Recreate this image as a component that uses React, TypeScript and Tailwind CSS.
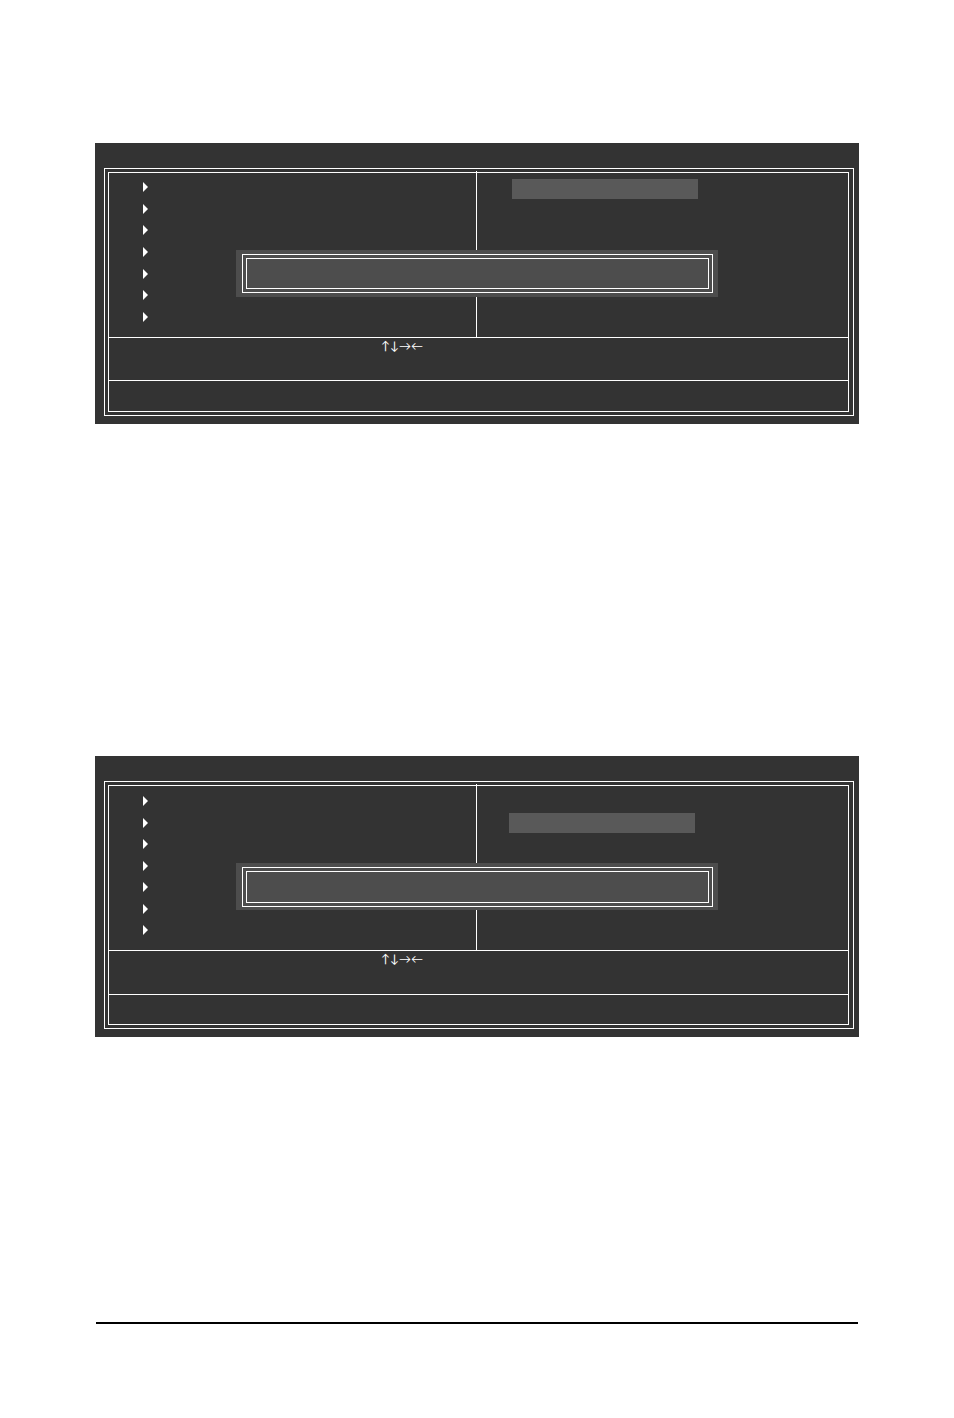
const menuItems = ["item-1", "item-2", "item-3", "item-4", "item-5", "item-6", "item-7"]

const screens = [
  {
    id: "first",
    list: "pt-[9px] pb-[15px]",
    highlight: "pt-1.5 pl-[35px]",
    dialog: "pb-1",
    help: "h-[43px]",
    footer: "h-[30px]",
  },
  {
    id: "second",
    list: "pt-[10px] pb-[15px]",
    highlight: "pt-[27px] pl-8",
    dialog: "pb-[3px]",
    help: "h-11",
    footer: "h-[29px]",
  },
]

function Marker() {
  return (
    <svg className="block h-[10px] w-[5px]" viewBox="0 0 5 10" fill="white" aria-hidden="true">
      <path d="M0 0L5 5L0 10Z" />
    </svg>
  )
}

function BiosScreen({ screen }: { screen: (typeof screens)[number] }) {
  return (
    <section className="bg-[#333333] pt-[25px] pr-[5px] pb-2 pl-[9px] text-white">
      {/* Double frame */}
      <div className="border border-white pt-[3px] pr-1 pb-[3px] pl-[3px]">
        <div className="border border-white">
          <div className="relative flex h-[165px] border-b border-white">
            <ul className={`flex flex-1 flex-col justify-between pl-[34px] ${screen.list}`}>
              {menuItems.map((item) => (
                <li key={item}>
                  <Marker />
                </li>
              ))}
            </ul>
            {/* Divider crosses the inner frame */}
            <div className="-mt-0.5 w-px bg-white" />
            <div className={`w-[371px] ${screen.highlight}`}>
              <div className="h-5 w-[186px] bg-[#595959]" />
            </div>

            {/* Dialog */}
            <div
              className={`absolute top-[77px] right-[130px] left-[127px] flex h-[47px] bg-[#4d4d4d] pt-1 pr-[5px] pl-1.5 ${screen.dialog}`}
            >
              <div className="flex flex-1 border border-white p-[3px]">
                <div className="flex-1 border border-white" />
              </div>
            </div>
          </div>

          <div className={`border-b border-white pl-[272px] ${screen.help}`}>
            <p className="font-['Lato',sans-serif] text-[12px] leading-4">↑↓→←</p>
          </div>
          <div className={screen.footer} />
        </div>
      </div>
    </section>
  )
}

export default function App() {
  return (
    <main className="min-h-screen bg-white px-[95px] pt-[143px] pb-[94px]">
      <div className="space-y-[332px]">
        {screens.map((screen) => (
          <BiosScreen key={screen.id} screen={screen} />
        ))}
      </div>
      <hr className="mx-px mt-[285px] border-t-2 border-black" />
    </main>
  )
}
